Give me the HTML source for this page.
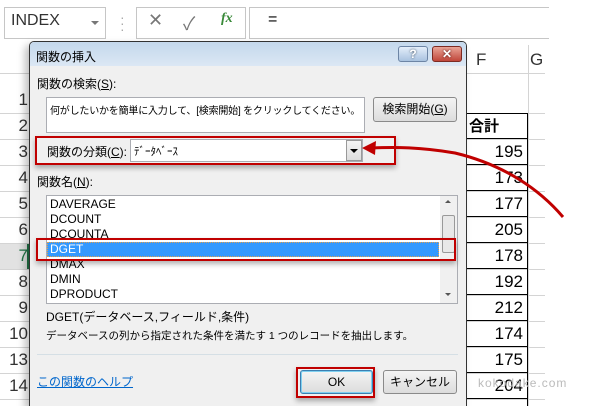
<!DOCTYPE html>
<html style="width:600px;height:406px;overflow:hidden"><head><meta charset="utf-8"><style>
*{margin:0;padding:0;box-sizing:border-box}
body{width:600px;height:406px;overflow:hidden;background:#fff;position:relative;font-family:"Liberation Sans","Noto Sans CJK JP",sans-serif;font-size:12px;color:#000}
.a{position:absolute}
.hl{position:absolute;height:1px;background:#d4d4d4}
.rn{position:absolute;left:0;width:28px;text-align:right;font-size:17px;color:#333;line-height:26px}
.cell{position:absolute;left:466px;width:62px;height:26px;border:1px solid #000;border-top:none;text-align:right;padding-right:4px;font-size:17px;line-height:25px}
.it{position:absolute;left:50px;font-size:12px;line-height:15px}
.btn{position:absolute;border:1px solid #8a8a8a;border-radius:3px;background:linear-gradient(#f4f4f4,#dcdcdc);text-align:center;font-size:12px}
</style></head><body>
<div class="a" style="left:4px;top:7px;width:102px;height:32px;border:1px solid #c6c6c6"></div>
<div class="a" style="left:11px;top:12px;font-size:16px;color:#333">INDEX</div>
<div class="a" style="left:91px;top:21px;width:0;height:0;border-left:4px solid transparent;border-right:4px solid transparent;border-top:4px solid #777"></div>
<div class="a" style="left:120px;top:14px;font-size:14px;color:#aaa;line-height:6px">·<br>·<br>·</div>
<div class="a" style="left:136px;top:7px;width:110px;height:32px;border:1px solid #c6c6c6"></div>
<div class="a" style="left:148px;top:10px;font-size:18px;color:#777">✕</div>
<div class="a" style="left:183px;top:10px;font-size:18px;color:#777">✓</div>
<div class="a" style="left:221px;top:11px;font-size:14px;color:#3a8a3a;font-style:italic;font-family:'Liberation Serif',serif;font-weight:bold">fx</div>
<div class="a" style="left:249px;top:7px;width:300px;height:32px;border:1px solid #c6c6c6;border-right:none"></div>
<div class="a" style="left:268px;top:11px;font-size:16px">=</div>
<div class="a" style="left:0;top:45px;width:545px;height:29px;background:#fff;border-bottom:1px solid #d4d4d4"></div>
<div class="a" style="left:476px;top:50px;font-size:17px;color:#333">F</div>
<div class="a" style="left:530px;top:50px;font-size:17px;color:#333">G</div>
<div class="a" style="left:528px;top:45px;width:1px;height:361px;background:#d4d4d4"></div>
<div class="a" style="left:29px;top:74px;width:1px;height:332px;background:#d4d4d4"></div>
<div class="a" style="left:0;top:243px;width:29px;height:26px;background:#e2e2e2;border-right:2px solid #217346"></div>
<div class="hl" style="left:0;top:113px;width:545px"></div>
<div class="hl" style="left:0;top:139px;width:545px"></div>
<div class="hl" style="left:0;top:165px;width:545px"></div>
<div class="hl" style="left:0;top:191px;width:545px"></div>
<div class="hl" style="left:0;top:217px;width:545px"></div>
<div class="hl" style="left:0;top:243px;width:545px"></div>
<div class="hl" style="left:0;top:269px;width:545px"></div>
<div class="hl" style="left:0;top:295px;width:545px"></div>
<div class="hl" style="left:0;top:321px;width:545px"></div>
<div class="hl" style="left:0;top:347px;width:545px"></div>
<div class="hl" style="left:0;top:373px;width:545px"></div>
<div class="hl" style="left:0;top:399px;width:545px"></div>
<div class="rn" style="top:87px">1</div><div class="rn" style="top:113px">2</div><div class="rn" style="top:139px">3</div><div class="rn" style="top:165px">4</div><div class="rn" style="top:191px">5</div><div class="rn" style="top:217px">6</div><div class="rn" style="top:243px;color:#217346">7</div><div class="rn" style="top:269px">8</div><div class="rn" style="top:295px">9</div><div class="rn" style="top:321px">10</div><div class="rn" style="top:347px">13</div><div class="rn" style="top:373px">14</div>
<div class="cell" style="top:113px;border-top:1px solid #000;text-align:left;padding-left:2px;font-weight:bold;font-size:15px">合計</div>
<div class="cell" style="top:139px">195</div><div class="cell" style="top:165px">173</div><div class="cell" style="top:191px">177</div><div class="cell" style="top:217px">205</div><div class="cell" style="top:243px">178</div><div class="cell" style="top:269px">192</div><div class="cell" style="top:295px">212</div><div class="cell" style="top:321px">174</div><div class="cell" style="top:347px">175</div><div class="cell" style="top:373px">204</div><div class="cell" style="top:399px"></div>
<div class="a" style="left:478px;top:376px;font-size:12px;color:#bbb;letter-spacing:1px">kokodake.com</div>
<div class="a" style="left:29px;top:41px;width:438px;height:366px;border:1px solid #333;border-radius:5px 5px 0 0;background:#f0f0f0;box-shadow:-4px 4px 8px rgba(0,0,0,.25)"></div>
<div class="a" style="left:30px;top:42px;width:436px;height:24px;border-radius:4px 4px 0 0;background:linear-gradient(#c4d8ec,#dbe7f4)"></div>
<div class="a" style="left:36px;top:48px;font-size:12px">関数の挿入</div>
<div class="btn" style="left:398px;top:46px;width:30px;height:16px;border-color:#6d85a5;background:linear-gradient(#e4eefa,#a9c2df);color:#fff;font-weight:bold;line-height:14px;text-shadow:0 0 2px #345">?</div>
<div class="btn" style="left:432px;top:46px;width:30px;height:16px;border-color:#7d2a22;background:linear-gradient(#e9a496,#c0463a);color:#fff;font-weight:bold;line-height:14px;text-shadow:0 0 2px #400">✕</div>
<div class="a" style="left:37px;top:75px">関数の検索(<u>S</u>):</div>
<div class="a" style="left:46px;top:97px;width:319px;height:36px;background:#fff;border:1px solid #abadb3"></div>
<div class="a" style="left:50px;top:102px;font-size:10px;white-space:nowrap;letter-spacing:-0.2px">何がしたいかを簡単に入力して、[検索開始] をクリックしてください。</div>
<div class="btn" style="left:373px;top:97px;width:84px;height:25px;line-height:23px">検索開始(<u>G</u>)</div>
<div class="a" style="left:130px;top:139px;width:233px;height:23px;background:#fff;border:1px solid #abadb3"></div>
<div class="a" style="left:134px;top:143px;font-size:11px">ﾃﾞｰﾀﾍﾞｰｽ</div>
<div class="a" style="left:346px;top:140px;width:16px;height:21px;border:1px solid #999;background:linear-gradient(#f4f4f4,#ddd)"></div>
<div class="a" style="left:350px;top:149px;border-left:4px solid transparent;border-right:4px solid transparent;border-top:4px solid #000"></div>
<div class="a" style="left:47px;top:143px">関数の分類(<u>C</u>):</div>
<div class="a" style="left:35px;top:136px;width:361px;height:29px;border:2px solid #c00000;box-shadow:0 3px 5px rgba(0,0,0,.3)"></div>
<div class="a" style="left:37px;top:173px">関数名(<u>N</u>):</div>
<div class="a" style="left:46px;top:195px;width:412px;height:109px;background:#fff;border:1px solid #abadb3"></div>
<div class="a" style="left:440px;top:196px;width:17px;height:107px;background:#f0f0f0"></div>
<div class="a" style="left:442px;top:215px;width:13px;height:38px;border:1px solid #999;border-radius:2px;background:#e8e8e8"></div>
<div class="a" style="left:445px;top:200px;border-left:3px solid transparent;border-right:3px solid transparent;border-bottom:3px solid #555"></div>
<div class="a" style="left:445px;top:293px;border-left:3px solid transparent;border-right:3px solid transparent;border-top:3px solid #555"></div>
<div class="it" style="top:197px">DAVERAGE</div>
<div class="it" style="top:212px">DCOUNT</div>
<div class="it" style="top:227px">DCOUNTA</div>
<div class="a" style="left:47px;top:242px;width:392px;height:15px;background:#3399ff;border:1px dotted #e0a050"></div>
<div class="it" style="top:242px;color:#fff">DGET</div>
<div class="it" style="top:257px">DMAX</div>
<div class="it" style="top:272px">DMIN</div>
<div class="it" style="top:287px">DPRODUCT</div>
<div class="a" style="left:36px;top:238px;width:420px;height:23px;border:2px solid #c00000;box-shadow:0 3px 5px rgba(0,0,0,.3)"></div>
<div class="a" style="left:46px;top:308px">DGET(データベース,フィールド,条件)</div>
<div class="a" style="left:46px;top:328px;font-size:10.5px;white-space:nowrap">データベースの列から指定された条件を満たす 1 つのレコードを抽出します。</div>
<div class="a" style="left:37px;top:354px;width:421px;height:1px;background:#d5dfe5"></div>
<div class="a" style="left:37px;top:373px;color:#0066cc;text-decoration:underline">この関数のヘルプ</div>
<div class="btn" style="left:300px;top:370px;width:73px;height:24px;line-height:22px;border-color:#3c7fb1;box-shadow:inset 0 0 0 1px #7fd0f0">OK</div>
<div class="a" style="left:296px;top:367px;width:79px;height:31px;border:2px solid #c00000;box-shadow:0 3px 5px rgba(0,0,0,.3)"></div>
<div class="btn" style="left:383px;top:370px;width:74px;height:24px;line-height:22px">キャンセル</div>
<svg class="a" style="left:0;top:0" width="600" height="406">
<path d="M563 217 C540 190 505 165 455 153 C420 147 395 147 372 148" fill="none" stroke="#c00000" stroke-width="3"/>
<polygon points="362,148 376,141 375,155" fill="#c00000"/>
</svg>
</body></html>
